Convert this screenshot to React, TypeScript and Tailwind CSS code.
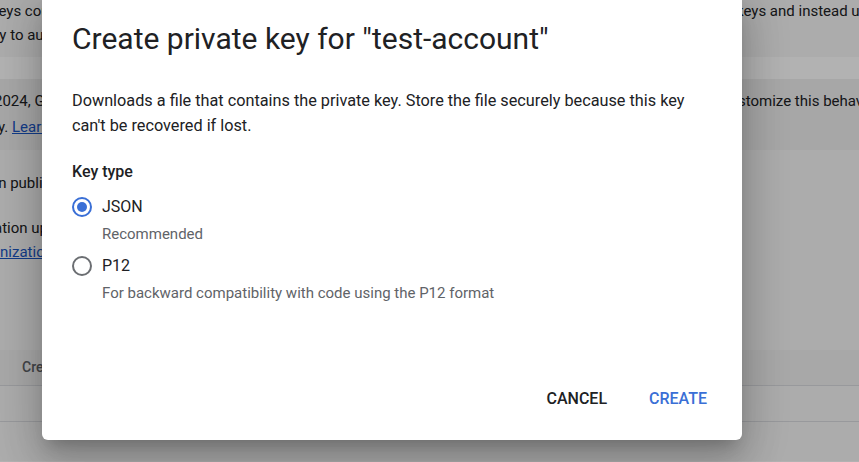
import React, { useState } from "react";

type KeyType = "json" | "p12";

const OPCOES: { id: KeyType; label: string; hint: string }[] = [
  { id: "json", label: "JSON", hint: "Recommended" },
  { id: "p12", label: "P12", hint: "For backward compatibility with code using the P12 format" },
];

function Radio({ checked }: { checked: boolean }) {
  return (
    <span
      className={
        checked
          ? "flex h-5 w-5 shrink-0 items-center justify-center rounded-full border-2 border-[#3a6fd6]"
          : "flex h-5 w-5 shrink-0 items-center justify-center rounded-full border-2 border-[#6b6e72]"
      }
    >
      {checked && <span className="h-[10px] w-[10px] rounded-full bg-[#3a6fd6]" />}
    </span>
  );
}

function PaginaFundo() {
  return (
    <div className="h-[462px] bg-[#f6f6f6] text-[15px] text-[#202124]">
      <div className="-mt-px leading-6">
        <div className="grid grid-cols-[742px_1fr] whitespace-nowrap">
          <div className="overflow-hidden">
            <span className="-ml-[9px] inline-block">keys could pose a security risk if compromised.</span>
          </div>
          <div className="overflow-hidden">
            <span className="-ml-[6px] inline-block">keys and instead use Workload Identity Federation.</span>
          </div>
        </div>
        <div className="overflow-hidden whitespace-nowrap">
          <span className="-ml-[20px] inline-block">way to authenticate to Google Cloud.</span>
        </div>
      </div>

      <div className="mt-[10px] h-[22px] bg-white" />

      <div className="h-[71px] bg-[#efefef] pt-[9px] leading-[26px]">
        <div className="grid grid-cols-[742px_1fr] whitespace-nowrap">
          <div className="overflow-hidden">
            <span className="-ml-[6px] inline-block">2024, Google Cloud enforces service account key creation constraints.</span>
          </div>
          <div className="overflow-hidden">
            <span className="-ml-[4px] inline-block">stomize this behavior with organization policies.</span>
          </div>
        </div>
        <div className="overflow-hidden whitespace-nowrap">
          <span className="-ml-[2px] inline-block">
            y. <span className="text-[#1a56c4] underline">Learn more</span>
          </span>
        </div>
      </div>

      <div className="h-[200px] pt-[21px] leading-6 whitespace-nowrap">
        <div className="overflow-hidden">
          <span className="-ml-[10px] inline-block">an public key certificates</span>
        </div>
        <div className="mt-[21px] overflow-hidden">
          <span className="-ml-[6px] inline-block">ation uploads are blocked by policy.</span>
        </div>
        <div className="overflow-hidden">
          <span className="-ml-[30px] inline-block text-[#1a56c4] underline">organization policies</span>
        </div>
      </div>

      <div className="flex h-[36px] items-center border-b border-[#dadce0] bg-[#f1f1f1] pl-[22px] text-[14px] font-medium text-[#5f6368]">
        Creation date
      </div>
      <div className="h-[36px] border-b border-[#dadce0]" />
    </div>
  );
}

export default function App() {
  const [tipo, setTipo] = useState<KeyType>("json");

  return (
    <div className="relative h-[462px] w-full overflow-hidden font-['Roboto',sans-serif]">
      <PaginaFundo />
      <div className="absolute inset-0 bg-black/30" />

      <div className="absolute left-[42px] top-[-8px] flex h-[448px] w-[700px] flex-col rounded-[6px] bg-white pl-[30px] pt-[29px] shadow-[0_11px_15px_-7px_rgba(0,0,0,0.2),0_24px_38px_3px_rgba(0,0,0,0.14),0_9px_46px_8px_rgba(0,0,0,0.12)]">
        <h1 className="text-[30px] leading-9 font-normal text-[#202124]">
          Create private key for "test-account"
        </h1>
        <p className="mt-[31px] pr-[36px] text-[16.25px] leading-[25px] text-[#202124]">
          Downloads a file that contains the private key. Store the file securely because this key
          can't be recovered if lost.
        </p>

        <div className="mt-[22px] text-[16px] leading-6 font-medium text-[#202124]">Key type</div>

        {OPCOES.map((o, i) => (
          <div key={o.id} className={i === 0 ? "mt-[11px]" : "mt-[10px]"}>
            <button
              type="button"
              onClick={() => setTipo(o.id)}
              className="flex h-6 items-center gap-[10px] text-[16px] text-[#202124]"
            >
              <Radio checked={tipo === o.id} />
              {o.label}
            </button>
            <div className="mt-[5px] pl-[30px] text-[15px] leading-5 text-[#5f6368]">{o.hint}</div>
          </div>
        ))}

        <div className="mt-auto flex justify-end gap-[10px] pb-[23px] pr-[19px]">
          <button type="button" className="h-9 rounded px-4 text-[16px] font-medium text-[#202124]">
            CANCEL
          </button>
          <button type="button" className="h-9 rounded px-4 text-[16px] font-medium text-[#3a6fd6]">
            CREATE
          </button>
        </div>
      </div>
    </div>
  );
}
